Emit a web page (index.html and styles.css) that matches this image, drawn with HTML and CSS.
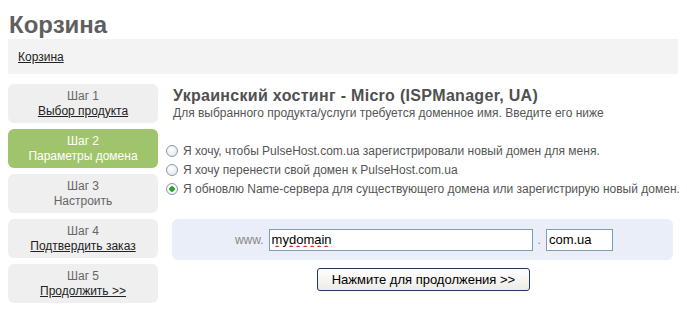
FILE: index.html
```html
<!DOCTYPE html>
<html lang="ru">

<head>
    <meta charset="UTF-8" />
    <meta name="viewport" content="width=device-width, initial-scale=1.0" />
    <title>Корзина</title>
    <link rel="stylesheet" href="styles.css">
</head>

<body>

    <h1 class="page-title">Корзина</h1>

    <div class="breadcrumb">
        <a href="#">Корзина</a>
    </div>

    <div class="layout">
        <ul class="steps">
            <li class="step">
                <span class="step-num">Шаг 1</span>
                <a href="#">Выбор продукта</a>
            </li>
            <li class="step active">
                <span class="step-num">Шаг 2</span>
                <span>Параметры домена</span>
            </li>
            <li class="step">
                <span class="step-num">Шаг 3</span>
                <span>Настроить</span>
            </li>
            <li class="step">
                <span class="step-num">Шаг 4</span>
                <a href="#">Подтвердить заказ</a>
            </li>
            <li class="step">
                <span class="step-num">Шаг 5</span>
                <a href="#">Продолжить &gt;&gt;</a>
            </li>
        </ul>

        <div class="main">
            <div class="intro">
                <h2>Украинский хостинг - Micro (ISPManager, UA)</h2>
                <p>Для выбранного продукта/услуги требуется доменное имя. Введите его ниже</p>
            </div>

            <div class="choices">
                <label><input type="radio" name="domain"> Я хочу, чтобы PulseHost.com.ua зарегистрировали новый домен для меня.</label>
                <label><input type="radio" name="domain"> Я хочу перенести свой домен к PulseHost.com.ua</label>
                <label><input type="radio" name="domain" checked> Я обновлю Name-сервера для существующего домена или зарегистрирую новый домен.</label>
            </div>

            <div class="domain-box">
                <span class="muted">www.</span>
                <input type="text" class="sld" value="mydomain">
                <span class="muted">.</span>
                <input type="text" class="tld" value="com.ua">
            </div>

            <div class="actions">
                <button>Нажмите для продолжения &gt;&gt;</button>
            </div>
        </div>
    </div>

</body>

</html>
```

FILE: styles.css
```css
body {
    margin: 8px;
    font-family: "Liberation Sans", Arial, sans-serif;
    font-size: 12px;
    color: #555;
    background-color: white;
}

a {
    color: #222;
}

.page-title {
    margin: 3px 0 0 1px;
    font-size: 24px;
    color: #5f5f5f;
    line-height: 28px;
}

.breadcrumb {
    width: 660px;
    height: 35px;
    padding-left: 10px;
    background-color: #f3f3f3;
    display: flex;
    align-items: center;
}

.layout {
    display: flex;
    margin-top: 10px;
}

.steps {
    list-style: none;
    margin: 0;
    padding: 0;
    width: 150px;
    flex-shrink: 0;
}

.step {
    height: 39px;
    margin-bottom: 6px;
    background-color: #efefef;
    border-radius: 6px;
    display: flex;
    flex-direction: column;
    align-items: center;
    justify-content: center;
    color: #666;
    line-height: 15px;
}

.step.active {
    background-color: #9fc46c;
    color: white;
}

.main {
    margin-left: 4px;
    width: 518px;
}

.intro {
    padding-left: 11px;
}

.intro h2 {
    margin: 0;
    padding-top: 2px;
    font-size: 16px;
    letter-spacing: 0.3px;
    color: #505050;
    line-height: 20px;
}

.intro p {
    margin: 0;
    line-height: 14px;
}

.choices {
    margin-top: 21px;
    display: flex;
    flex-direction: column;
    white-space: nowrap;
}

.choices label {
    height: 19px;
    display: flex;
    align-items: center;
}

.choices input {
    appearance: none;
    flex-shrink: 0;
    margin: 0 5px 0 4px;
    width: 12px;
    height: 12px;
    border: 1px solid #8a98a8;
    border-radius: 50%;
    background: radial-gradient(circle at 40% 35%, #ffffff, #dfe3e8);
}

.choices input:checked {
    background: radial-gradient(circle, #33a033 0, #33a033 2.5px, #ffffff 3px, #e6eaee);
}

.domain-box {
    margin: 21px 7px 0 10px;
    height: 41px;
    background-color: #e9eef8;
    border-radius: 6px;
    display: flex;
    align-items: center;
    justify-content: center;
    gap: 5px;
    padding-left: 3px;
}

.muted {
    color: #888;
}

.domain-box input {
    height: 22px;
    box-sizing: border-box;
    border: 1px solid #7f9db9;
    padding: 0 2px;
    font-family: "Liberation Sans", Arial, sans-serif;
    font-size: 13px;
    color: black;
}

.sld {
    width: 264px;
    text-decoration: underline wavy #d22;
}

.tld {
    width: 67px;
}

.actions {
    margin-top: 8px;
    display: flex;
    justify-content: center;
    padding-left: 5px;
}

button {
    width: 213px;
    height: 23px;
    border: 1px solid #1f3c5a;
    border-radius: 3px;
    background: linear-gradient(#ffffff, #ecebe6);
    font-family: "Liberation Sans", Arial, sans-serif;
    font-size: 13px;
    color: black;
    padding: 0;
}
```
